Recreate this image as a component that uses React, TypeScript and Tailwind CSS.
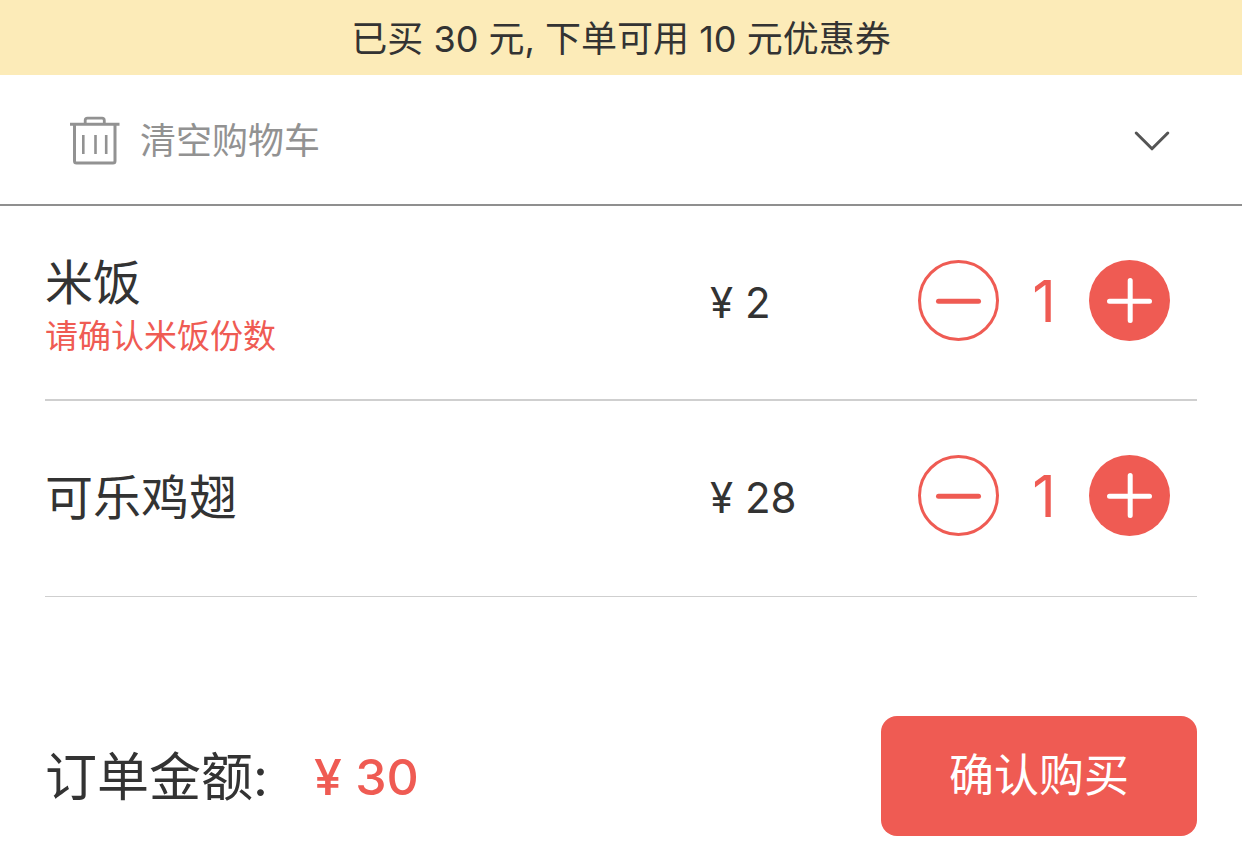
import { useState } from "react";

type Item = { id: string; name: string; hint?: string; price: number; count: number };

const initialItems: Item[] = [
  { id: "rice", name: "米饭", hint: "请确认米饭份数", price: 2, count: 1 },
  { id: "wings", name: "可乐鸡翅", price: 28, count: 1 },
];

function TrashIcon() {
  return (
    <svg className="h-[50px] w-[50px]" viewBox="0 0 50 50" fill="none" stroke="currentColor" aria-hidden="true">
      <path d="M0 8.2H49.5" strokeWidth="3" />
      <path d="M15.2 8V4.5Q15.2 2.2 17.5 2.2H32Q34.3 2.2 34.3 4.5V8" strokeWidth="2.8" />
      <path d="M4.5 8V45Q4.5 47 6.5 47H43Q45 47 45 45V8" strokeWidth="3" />
      <path d="M13.3 19V38M25.5 19V38M36.2 19V38" strokeWidth="2.6" />
    </svg>
  );
}

function ChevronIcon() {
  return (
    <svg className="h-6 w-9" viewBox="0 0 36 24" fill="none" stroke="currentColor" strokeWidth="3" strokeLinecap="round" strokeLinejoin="round" aria-hidden="true">
      <path d="M2.2 4L18 19.8L33.8 4" />
    </svg>
  );
}

function MinusIcon() {
  return (
    <svg className="size-[81px]" viewBox="0 0 81 81" fill="none" stroke="currentColor" strokeLinecap="round" aria-hidden="true">
      <circle cx="40.5" cy="40.5" r="39" strokeWidth="3" />
      <path d="M20.5 41.2H60.5" strokeWidth="5" />
    </svg>
  );
}

function PlusIcon() {
  return (
    <svg className="size-[81px]" viewBox="0 0 81 81" fill="none" aria-hidden="true">
      <circle cx="40.5" cy="40.5" r="40.5" fill="currentColor" />
      <path d="M20.5 41.2H60.5M41.2 20.5V60.5" stroke="white" strokeWidth="5" strokeLinecap="round" />
    </svg>
  );
}

function CartRow({ item, onChange }: { item: Item; onChange: (delta: number) => void }) {
  return (
    <li className="grid grid-cols-[1fr_208px_252px] items-center border-b-2 border-[#cfcfcf] pt-[54px] pr-[27px] pb-[58px] last:border-b last:pb-[60px]">
      <div className="-my-4 pt-1">
        <h2 className="text-[48px] leading-[66px]">{item.name}</h2>
        {item.hint && <p className="text-[33px] leading-[40px] text-[#ef5b53]">{item.hint}</p>}
      </div>
      <p className="pt-1 text-[42px] leading-[52px]">¥ {item.price}</p>
      <div className="flex items-center justify-between text-[#ef5b53]">
        <button type="button" aria-label={`减少${item.name}`} onClick={() => onChange(-1)}>
          <MinusIcon />
        </button>
        <span className="text-[58px] leading-[80px]">{item.count}</span>
        <button type="button" aria-label={`增加${item.name}`} onClick={() => onChange(1)}>
          <PlusIcon />
        </button>
      </div>
    </li>
  );
}

export default function App() {
  const [items, setItems] = useState(initialItems);
  const [open, setOpen] = useState(true);
  const total = items.reduce((sum, item) => sum + item.price * item.count, 0);

  const change = (id: string, delta: number) =>
    setItems((list) =>
      list
        .map((item) => (item.id === id ? { ...item, count: item.count + delta } : item))
        .filter((item) => item.count > 0),
    );

  return (
    <main className="min-h-screen bg-white font-['Inter','Noto_Sans_CJK_SC',sans-serif] font-normal text-[#333333]" lang="zh-CN">
      <p className="bg-[#fcebb8] pt-[13px] pb-[10px] text-center text-[36px] leading-[52px]">已买 30 元, 下单可用 10 元优惠券</p>
      <header className="flex h-[131px] items-center justify-between border-b-2 border-[#8f8f8f] pt-[3px] pr-[72px] pl-[70px]">
        <button type="button" className="flex items-center gap-5 text-[#929292]" onClick={() => setItems([])}>
          <TrashIcon />
          <span className="text-[36px] leading-[52px]">清空购物车</span>
        </button>
        <button type="button" aria-label="收起" className="text-[#555555]" onClick={() => setOpen(!open)}>
          <ChevronIcon />
        </button>
      </header>
      {open && (
        <ul className="px-[45px]">
          {items.map((item) => (
            <CartRow key={item.id} item={item} onChange={(delta) => change(item.id, delta)} />
          ))}
        </ul>
      )}
      <footer className="flex items-center justify-between px-[45px] pt-[119px] pb-6">
        <p className="flex items-center gap-[46px]">
          <span className="pt-1 text-[52px] leading-[60px]">订单金额:</span>
          <strong className="pt-0.5 text-[50px] leading-[60px] font-medium text-[#ef5b53]">¥ {total}</strong>
        </p>
        <button type="button" className="rounded-2xl bg-[#ef5b53] px-[68px] py-7 text-[45px] leading-[64px] text-white">
          确认购买
        </button>
      </footer>
    </main>
  );
}
